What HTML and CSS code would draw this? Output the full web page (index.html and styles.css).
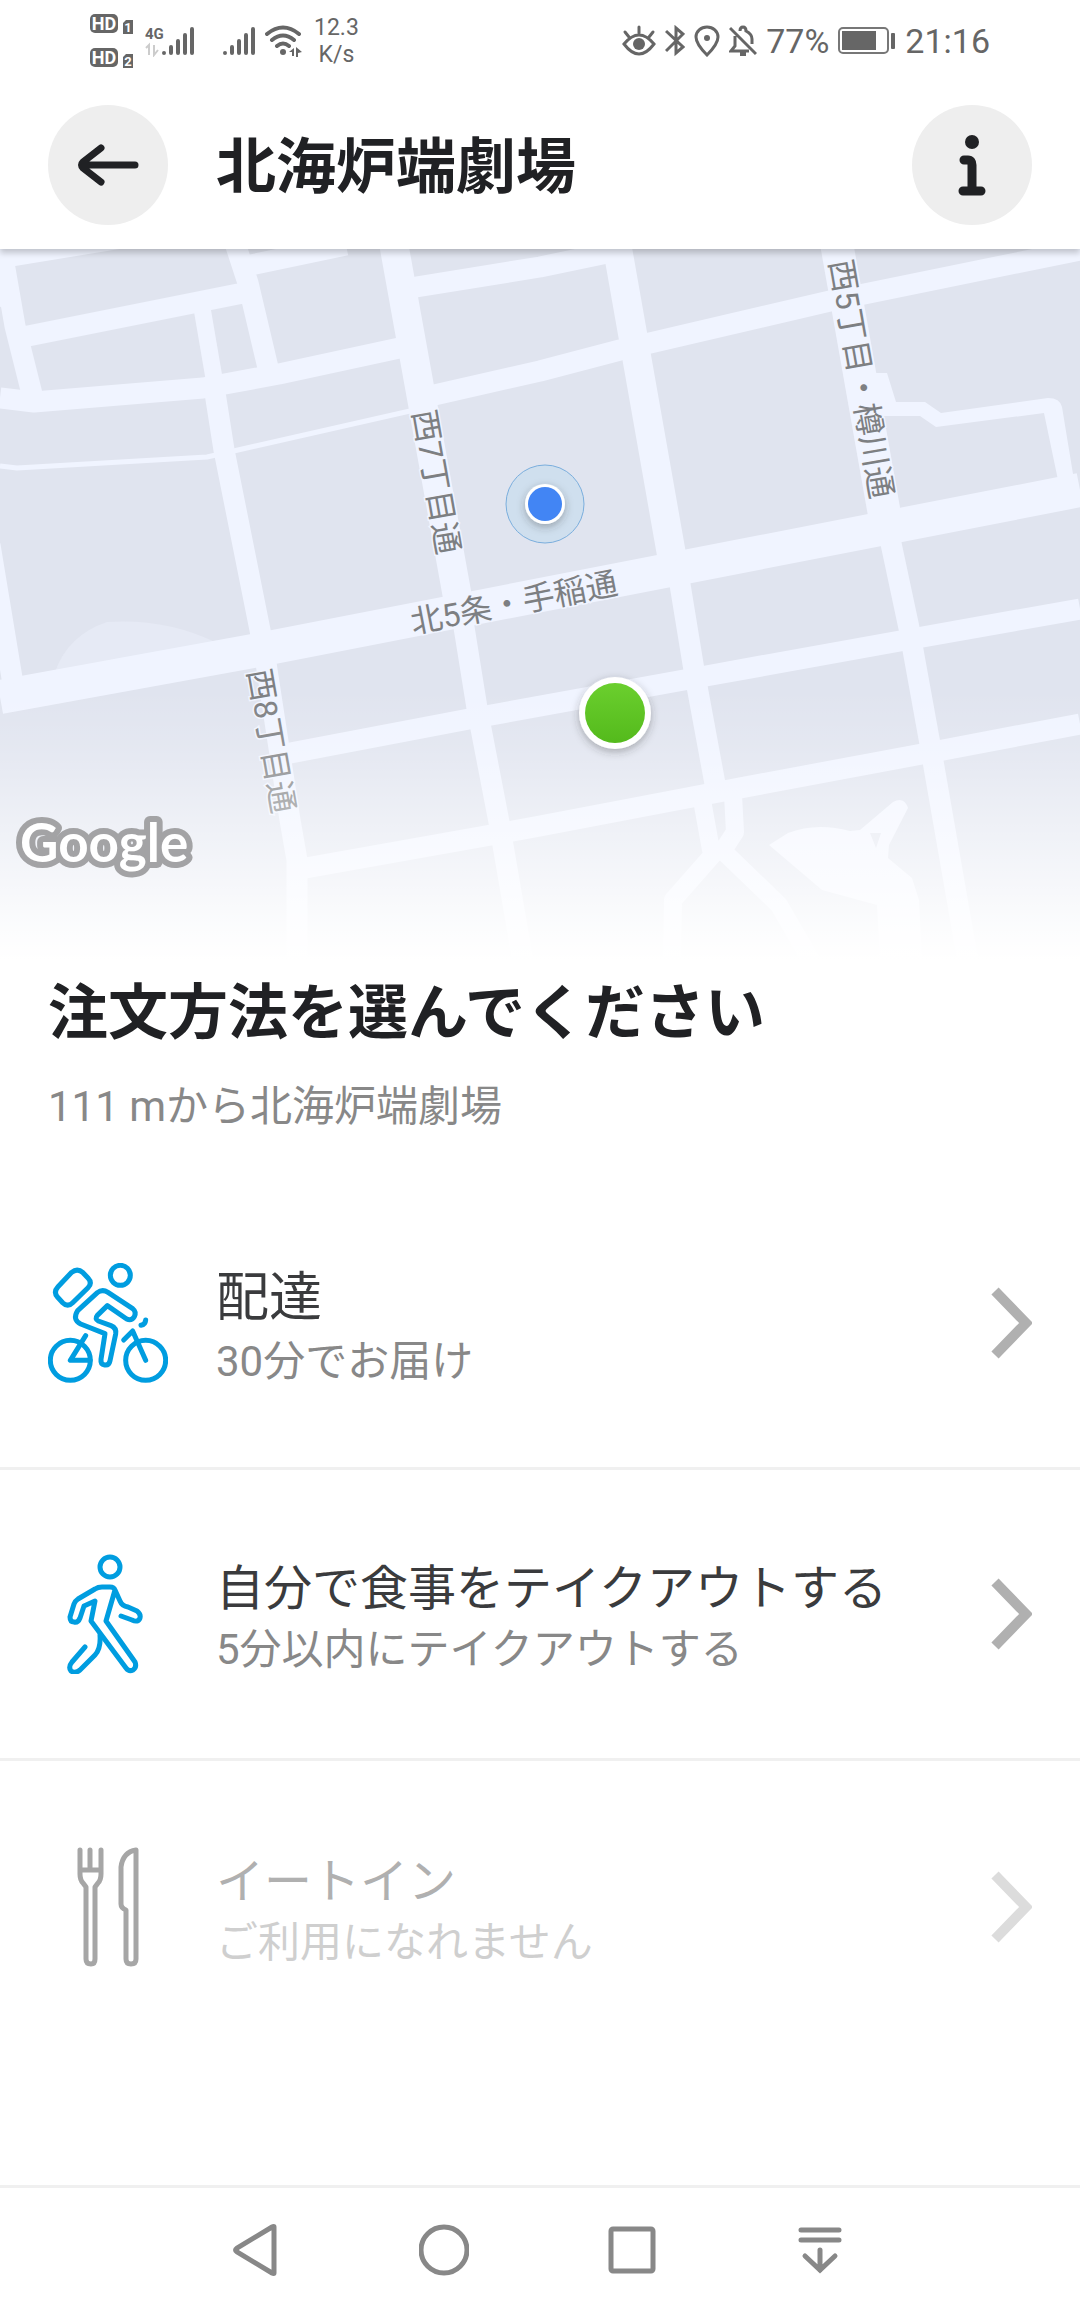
FILE: index.html
```html
<!DOCTYPE html>
<html lang="ja">
<head>
<meta charset="utf-8">
<meta name="viewport" content="width=device-width, initial-scale=1">
<title>北海炉端劇場</title>
<link rel="stylesheet" href="styles.css">
</head>
<body>
<div class="screen">
  <div class="status">
    <div class="status-left">
      <svg class="sims" width="44" height="56" viewBox="0 0 44 56">
        <g fill="#666">
          <rect x="0" y="1" width="28" height="19" rx="5"/>
          <rect x="0" y="35" width="28" height="19" rx="5"/>
          <path d="M33 10l3-3h7v14H33zM33 44l3-3h7v14H33z"/>
        </g>
        <g fill="#fff" font-weight="700" text-anchor="middle">
          <text x="14" y="17" font-size="18">HD</text>
          <text x="14" y="51" font-size="18">HD</text>
          <text x="38" y="19" font-size="13">1</text>
          <text x="38" y="53" font-size="13">2</text>
        </g>
      </svg>
      <svg class="net" width="50" height="32" viewBox="0 0 50 32">
        <text x="0" y="14" font-size="15" font-weight="700" fill="#666">4G</text>
        <path d="M1 23l3-3v10M9 20v10l4-5" fill="none" stroke="#ccc" stroke-width="2"/>
        <path d="M19 28v0M26 22v6M33 16v12M40 10v18M47 4v24" stroke="#666" stroke-width="4" stroke-linecap="round"/>
      </svg>
      <svg class="net2" width="33" height="32" viewBox="0 0 33 32">
        <path d="M2 28v0M9 22v6M16 16v12M23 10v18M30 4v24" stroke="#666" stroke-width="4" stroke-linecap="round"/>
      </svg>
      <svg width="37" height="32" viewBox="0 0 37 32">
        <path d="M2 9Q18-4 34 9M7 15Q18 6 29 15M12 21Q18 16 24 21" fill="none" stroke="#666" stroke-width="4" stroke-linecap="round"/>
        <circle cx="18" cy="27" r="3" fill="#666"/>
        <path d="M24 27l5-4v8h-2v-4zM31 22l6 5-4 1v4h-2z" fill="#666"/>
      </svg>
      <div class="speed">12.3<br>K/s</div>
    </div>
    <div class="status-right">
      <svg width="34" height="32" viewBox="0 0 34 32" fill="none" stroke="#666" stroke-width="3" stroke-linecap="round">
        <path d="M2 19Q17 1 32 19Q17 39 2 19ZM17 2v6M3 7l4 5M31 7l-4 5"/><circle cx="17" cy="19" r="6" fill="#666" stroke="none"/>
      </svg>
      <svg width="20" height="32" viewBox="0 0 20 32" fill="none" stroke="#666" stroke-width="3">
        <path d="M1 6l17 16-7 6V3l7 6L1 26"/>
      </svg>
      <svg width="26" height="32" viewBox="0 0 26 32" fill="none" stroke="#666" stroke-width="3">
        <path d="M13 30Q2 19 2 12a11 10 0 0 1 22 0Q24 19 13 30Z"/><circle cx="13" cy="13" r="3" fill="#666" stroke="none"/>
      </svg>
      <svg width="28" height="32" viewBox="0 0 28 32" fill="none" stroke="#666" stroke-width="3">
        <path d="M1 3l26 26M20 26H2l4-5V11M11 6q0-4 3-4t3 4q6 3 6 8v5"/><path d="M11 29h6" stroke-width="4"/>
      </svg>
      <span class="battery-text">77%</span>
      <svg width="58" height="28" viewBox="0 0 58 28">
        <rect x="1" y="1" width="49" height="25" rx="4" fill="none" stroke="#777" stroke-width="2"/>
        <rect x="4" y="4" width="34" height="19" fill="#666"/><rect x="53" y="6" width="4" height="16" rx="1" fill="#666"/>
      </svg>
      <time class="clock">21:16</time>
    </div>
  </div>

  <header class="header">
    <button class="round" type="button" aria-label="戻る">
      <svg width="120" height="120" viewBox="0 0 120 120" fill="none" stroke="#202124" stroke-width="7" stroke-linecap="round" stroke-linejoin="round">
        <path d="M87 60H34M53 43L35 57Q32 60 35 63L53 77"/>
      </svg>
    </button>
    <h1 class="title">北海炉端劇場</h1>
    <button class="round" type="button" aria-label="情報">
      <svg width="120" height="120" viewBox="0 0 120 120" fill="none" stroke="#202124" stroke-width="9" stroke-linecap="round" stroke-linejoin="round">
        <circle cx="60" cy="37" r="7" fill="#202124" stroke="none"/>
        <path d="M52 55h4q4 0 4 5v25M51 86h18"/>
      </svg>
    </button>
  </header>

  <main>
    <svg class="map" viewBox="0 249 1080 711" role="img" aria-label="地図">
      <defs>
        <linearGradient id="fade" x1="0" y1="0" x2="0" y2="1">
          <stop offset="0" stop-color="#fff" stop-opacity="0"/>
          <stop offset=".2" stop-color="#fff" stop-opacity=".14"/>
          <stop offset=".9" stop-color="#fff" stop-opacity=".92"/>
          <stop offset="1" stop-color="#fff"/>
        </linearGradient>
        <linearGradient id="pin" x1="0" y1="0" x2="0" y2="1">
          <stop offset="0" stop-color="#6bcf2e"/><stop offset="1" stop-color="#54ba1c"/>
        </linearGradient>
        <filter id="lift" x="-50%" y="-50%" width="200%" height="200%">
          <feDropShadow dx="0" dy="3" stdDeviation="4" flood-color="#333" flood-opacity=".35"/>
        </filter>
      </defs>
      <rect y="249" width="1080" height="711" fill="#e0e4ef"/>
      <path d="M55 672Q68 635 107 622Q165 618 215 642L120 670Z" fill="#e6eaf5"/>
      <g fill="none" stroke="#f0f4ff" stroke-width="21" stroke-linejoin="round">
        <path d="M0 697L253 651L690 566L1080 490" stroke-width="34"/>
        <path d="M393 240L458 600M616 240L676 580" stroke-width="29"/>
        <path d="M836 240L889 540" stroke-width="33"/>
        <path d="M458 590L477 708L499 822L523 962"/>
        <path d="M676 560L694 670L718 800"/>
        <path d="M886 520L909 628L930 744L968 962"/>
        <path d="M0 240L15 326L33 398M-10 545L13 684"/>
        <path d="M-20 261L140 235M18 338L243 293M246 266L346 245M234 240L248 283L269 372"/>
        <path d="M202 308L215 384" stroke-width="17"/>
        <path d="M213 380L224 450L264 650L290 820L297 860V962"/>
        <path d="M0 398L34 402L203 388L279 374L404 347M410 288L540 267L612 252"/>
        <path d="M430 396L540 371L620 350L830 301L1080 250"/>
        <path d="M285 754L469 719L706 676L900 641L1080 609M300 869L491 835L540 826L708 794L922 754L1080 724"/>
        <path d="M0 466L17 468L207 457L238 450L410 411" stroke-width="5"/>
        <path d="M702 800L711 850L722 852L735 832L733 795M717 850L673 900L672 962M722 850L779 905L812 962" stroke-width="18"/>
      </g>
      <path d="M0 249H41L14 266L20 300L0 307Z" fill="#f0f4ff"/>
      <path d="M870 373H887L896 402H925L941 413L1048 398Q1060 398 1062 407L1074 480H1058L1044 413L936 427L920 416H880Z" fill="#f0f4ff"/>
      <path d="M769 845L788 833Q816 822 850 831L860 830L893 802Q904 796 908 808L889 845L888 858L912 878L919 900L922 960H880L877 905L822 890ZM870 833L876 848L881 833Z" fill="#f2f5ff" fill-rule="evenodd"/>
      <g class="street">
        <text transform="translate(514 603) rotate(-11)">北5条・手稲通</text>
        <text transform="translate(436 482) rotate(80)">西7丁目通</text>
        <text transform="translate(271 741) rotate(80)">西8丁目通</text>
        <text transform="translate(861 379) rotate(80)">西5丁目・樽川通</text>
      </g>
      <rect y="690" width="1080" height="271" fill="url(#fade)"/>
      <text class="google" x="20" y="862">Google</text>
      <circle cx="545" cy="504" r="39" fill="#cfdfee" stroke="#7aaedd" stroke-width="1"/>
      <circle cx="545" cy="504" r="20" fill="#fff" filter="url(#lift)"/>
      <circle cx="545" cy="504" r="17" fill="#4285f4"/>
      <circle cx="615" cy="713" r="36" fill="#fff" filter="url(#lift)"/>
      <circle cx="615" cy="713" r="30" fill="url(#pin)"/>
    </svg>

    <section class="intro">
      <h2 class="heading">注文方法を選んでください</h2>
      <p class="distance">111 mから北海炉端劇場</p>
    </section>

    <div class="options">
      <button class="option" type="button">
        <svg class="option-icon" width="120" height="120" viewBox="54 69 360 360" stroke-width="15">
          <circle cx="271" cy="106" r="30"/>
          <path d="M125 97L84 140Q69 156 83 172L98 188Q113 203 128 188L174 143Q188 129 174 114L159 98Q142 83 125 97Z"/>
          <circle cx="121" cy="361" r="60"/><circle cx="347" cy="361" r="60"/>
          <path d="M234 157L308 206Q320 216 313 230Q304 244 290 237L232 197L202 226Q193 237 205 243L243 257Q260 264 257 282L240 362Q237 377 224 375Q211 373 213 358L225 281L152 252Q126 239 143 212L202 158Q217 146 234 157Z"/>
          <path d="M167 287L121 361H180M281 300L308 273L347 361M333 256Q346 254 347 240"/>
        </svg>
        <span class="option-text"><span class="option-title large">配達</span><span class="option-note">30分でお届け</span></span>
        <svg class="chevron" width="42" height="74" viewBox="0 0 42 74"><path d="M5 5L36 37L5 69"/></svg>
      </button>
      <button class="option" type="button">
        <svg class="option-icon" width="120" height="120" viewBox="0 0 120 120" stroke-width="5">
          <circle cx="62" cy="13" r="10"/>
          <path d="M67 36Q66 33 62 33H54Q50 33 47 35L30 45Q27 47 26 50L22 63Q22 68 26 68Q30 69 32 64L36 52L47 47L43 67L78 114Q81 118 85 116Q89 113 87 108L58 67L67 36L72 47Q74 52 80 53L89 57Q93 60 92 64Q90 69 84 66L73 62"/>
          <path d="M52 81Q53 95 47 101L32 116Q27 120 23 117Q20 113 24 108L37 93"/>
        </svg>
        <span class="option-text"><span class="option-title">自分で食事をテイクアウトする</span><span class="option-note">5分以内にテイクアウトする</span></span>
        <svg class="chevron" width="42" height="74" viewBox="0 0 42 74"><path d="M5 5L36 37L5 69"/></svg>
      </button>
      <button class="option" type="button" disabled>
        <svg class="option-icon" width="120" height="120" viewBox="0 0 120 120" stroke-width="5">
          <path d="M32 3V27Q32 33 35 36L38 40V112Q38 117 43 117Q47 117 47 112V40L50 36Q53 33 53 27V3M42 3V22M32 23H53"/>
          <path d="M88 3V112Q88 117 83 117Q78 117 78 112V63Q73 61 73 57V20Q75 5 88 3Z"/>
        </svg>
        <span class="option-text"><span class="option-title">イートイン</span><span class="option-note">ご利用になれません</span></span>
        <svg class="chevron" width="42" height="74" viewBox="0 0 42 74"><path d="M5 5L36 37L5 69"/></svg>
      </button>
    </div>
  </main>

  <nav class="navbar" aria-label="システム">
    <button type="button" aria-label="戻る"><svg width="50" height="52" viewBox="0 0 50 52"><path d="M43 3V49Q43 50 41 49L6 28Q3 26 6 24L41 3Q43 2 43 3Z"/></svg></button>
    <button type="button" aria-label="ホーム"><svg width="50" height="52" viewBox="0 0 50 52"><circle cx="25" cy="26" r="23"/></svg></button>
    <button type="button" aria-label="最近"><svg width="50" height="52" viewBox="0 0 50 52"><rect x="4" y="5" width="42" height="42" rx="2"/></svg></button>
    <button type="button" aria-label="通知"><svg width="50" height="52" viewBox="0 0 50 52"><path d="M6 6H44M6 16H44M25 26V46M10 32L25 46L40 32"/></svg></button>
  </nav>
</div>
</body>
</html>
```

FILE: styles.css
```css
* { box-sizing: border-box; }

body {
  margin: 0;
  background: #fff;
  color: #202124;
  font-family: Roboto, "Noto Sans CJK JP", sans-serif;
}

button {
  margin: 0;
  padding: 0;
  border: 0;
  background: none;
  color: inherit;
  font: inherit;
}

svg { display: block; flex: none; }

.screen {
  display: flex;
  flex-direction: column;
  min-height: 100vh;
}

/* Status bar */
.status {
  position: relative;
  z-index: 1;
  display: flex;
  justify-content: space-between;
  height: 81px;
  padding: 0 90px;
  background: #fff;
  color: #666;
}

.status-left,
.status-right {
  display: flex;
  align-items: center;
  height: 82px;
}

.sims { margin-right: 11px; }
.net { margin-right: 28px; }
.net2 { margin-right: 9px; }

.speed {
  margin-left: 12px;
  font-size: 23px;
  line-height: 27px;
  text-align: center;
}

.status-right {
  gap: 9px;
  font-size: 34px;
}

/* Header */
.header {
  position: relative;
  display: flex;
  align-items: center;
  gap: 48px;
  height: 168px;
  padding: 0 48px;
  background: #fff;
  box-shadow: 0 4px 6px rgba(0, 0, 0, .2);
}

.round {
  flex: none;
  width: 120px;
  height: 120px;
  border-radius: 50%;
  background: #eee;
}

.title {
  flex: 1;
  margin: 0;
  padding-top: 6px;
  font-size: 60px;
  font-weight: 700;
  line-height: 72px;
}

/* Map */
.map { width: 100%; height: auto; }

.street text {
  fill: #7d7f82;
  stroke: #f0f4ff;
  stroke-width: 3px;
  paint-order: stroke;
  font-size: 32px;
  text-anchor: middle;
  dominant-baseline: central;
}

.google {
  fill: #fff;
  stroke: #a3a3a5;
  stroke-width: 12px;
  stroke-linejoin: round;
  paint-order: stroke;
  font-family: Lato, sans-serif;
  font-size: 53px;
  font-weight: 700;
}

/* Intro */
.intro { padding: 18px 48px 42px; }

.heading {
  margin: 0;
  font-size: 60px;
  font-weight: 700;
  line-height: 72px;
}

.distance {
  margin: 27px 0 0;
  color: #888;
  font-size: 42px;
  line-height: 60px;
}

/* Order options */
.option {
  display: flex;
  align-items: center;
  gap: 48px;
  width: 100%;
  height: 291px;
  padding: 0 48px;
  border-bottom: 3px solid #f0f0f0;
  text-align: left;
}

.option:last-child { border-bottom: 0; }

.option-icon {
  fill: none;
  stroke: #009de0;
  stroke-linecap: round;
  stroke-linejoin: round;
}

.option-text {
  display: flex;
  flex: 1;
  flex-direction: column;
  padding-top: 12px;
}

.option-title {
  color: #3a3b3d;
  font-size: 48px;
  line-height: 60px;
}

.option-title.large {
  font-size: 53px;
  line-height: 66px;
}

.option-note {
  color: #888;
  font-size: 42px;
  line-height: 62px;
}

.chevron {
  fill: none;
  stroke: #b0b0b0;
  stroke-width: 10;
}

.option:disabled .option-icon { stroke: #a6a6a6; }
.option:disabled .option-title { color: #b0b0b0; }
.option:disabled .option-note { color: #cfcfcf; }
.option:disabled .chevron { stroke: #dcdcdc; }

/* System navigation */
.navbar {
  display: flex;
  justify-content: center;
  height: 127px;
  margin-top: auto;
  padding-right: 4px;
  border-top: 3px solid #f0f0f0;
}

.navbar button {
  display: grid;
  place-items: center;
  width: 188px;
}

.navbar svg {
  fill: none;
  stroke: #888;
  stroke-width: 5;
  stroke-linecap: round;
}
```
